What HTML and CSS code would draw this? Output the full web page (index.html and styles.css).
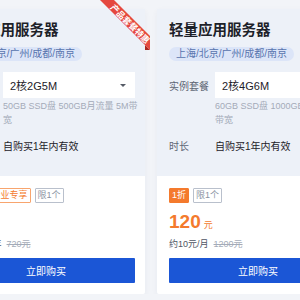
FILE: index.html
```html
<!DOCTYPE html>
<html lang="zh-CN">
<head>
    <meta charset="UTF-8">
    <title>轻量应用服务器</title>
    <link rel="stylesheet" href="styles.css">
</head>
<body>

<div class="cards">

    <div class="card">
        <svg class="ribbon" width="70" height="60" viewBox="0 0 70 60">
            <polygon class="ribbon-fold" points="55,45 60,50 55,50"></polygon>
            <polygon class="ribbon-band" points="1,-9 15,-9 24,0 60,36 60,50 10,0"></polygon>
            <text class="ribbon-text" x="0" y="0" transform="translate(40 24) rotate(45)">产品套餐特惠</text>
        </svg>
        <div class="card-top">
            <h2 class="card-title">轻量应用服务器</h2>
            <div class="region">上海/北京/广州/成都/南京</div>
            <div class="spec-row">
                <span class="spec-label">实例套餐</span>
                <div class="select"><span>2核2G5M</span><i class="caret"></i></div>
            </div>
            <div class="spec-desc">50GB SSD盘 500GB月流量 5M带宽</div>
            <div class="spec-row duration">
                <span class="spec-label">时长</span>
                <span class="spec-value">自购买1年内有效</span>
            </div>
        </div>
        <div class="card-bottom">
            <div class="tags">
                <span class="tag tag-fill">2.5折</span>
                <span class="tag tag-line">企业专享</span>
                <span class="tag tag-gray">限1个</span>
            </div>
            <div class="price"><strong>72</strong><span>元</span></div>
            <div class="price-sub"><span>约72元/1年</span><s>720元</s></div>
            <button class="buy">立即购买</button>
        </div>
    </div>

    <div class="card">
        <div class="card-top">
            <h2 class="card-title">轻量应用服务器</h2>
            <div class="region">上海/北京/广州/成都/南京</div>
            <div class="spec-row">
                <span class="spec-label">实例套餐</span>
                <div class="select"><span>2核4G6M</span><i class="caret"></i></div>
            </div>
            <div class="spec-desc">60GB SSD盘 1000GB月流量 6M带宽</div>
            <div class="spec-row duration">
                <span class="spec-label">时长</span>
                <span class="spec-value">自购买1年内有效</span>
            </div>
        </div>
        <div class="card-bottom">
            <div class="tags">
                <span class="tag tag-fill">1折</span>
                <span class="tag tag-gray">限1个</span>
            </div>
            <div class="price"><strong>120</strong><span>元</span></div>
            <div class="price-sub"><span>约10元/月</span><s>1200元</s></div>
            <button class="buy">立即购买</button>
        </div>
    </div>

</div>

</body>
</html>
```

FILE: styles.css
```css
:root {
    --page-bg: #f2f4f8;
    --card-top-bg: #edf1f8;
    --title-color: #1d2129;
    --label-color: #5f6775;
    --muted-color: #a4abb8;
    --orange: #f47a2d;
    --blue: #1b56d6;
}

body {
    margin: 0;
    background-color: var(--page-bg);
    font-family: "Liberation Sans", "Noto Sans CJK SC", sans-serif;
    color: var(--title-color);
}

.cards {
    display: flex;
    gap: 12px;
    width: max-content;
    margin-left: -55px;
    padding-top: 9px;
}

.card {
    position: relative;
    flex: none;
    width: 200px;
    background-color: #ffffff;
    border-radius: 2px;
    box-shadow: 0 2px 6px rgba(30, 50, 90, 0.05);
}

/* corner ribbon, hangs over the card edge */
.ribbon {
    position: absolute;
    left: 145px;
    top: -9px;
}
.ribbon-band {
    fill: #e5483f;
}
.ribbon-fold {
    fill: #a8261f;
}
.ribbon-text {
    fill: #ffffff;
    font-size: 8.5px;
    font-weight: bold;
    text-anchor: middle;
    dominant-baseline: central;
}

.card-top {
    box-sizing: border-box;
    height: 167px;
    padding: 11px 10px 0 12px;
    background-color: var(--card-top-bg);
}

.card-title {
    margin: 0;
    font-size: 14.5px;
    line-height: 20px;
    font-weight: bold;
}

.region {
    width: fit-content;
    margin-top: 7px;
    padding: 0 7px;
    height: 14px;
    line-height: 14px;
    border-radius: 7px;
    background-color: #dce5f8;
    color: #5874ae;
    font-size: 10px;
}

.spec-row {
    display: grid;
    grid-template-columns: 46px 132px;
    align-items: center;
    margin-top: 11px;
}
.spec-label {
    font-size: 10px;
    color: var(--label-color);
}

.select {
    box-sizing: border-box;
    height: 26px;
    display: flex;
    align-items: center;
    justify-content: space-between;
    padding: 0 9px 0 7px;
    background-color: #ffffff;
    font-size: 11px;
}
.caret {
    border-left: 3px solid transparent;
    border-right: 3px solid transparent;
    border-top: 3px solid #555b66;
}

.spec-desc {
    width: 136px;
    margin: 1px 0 0 46px;
    font-size: 9px;
    line-height: 14px;
    color: var(--muted-color);
}

.spec-row.duration {
    margin-top: 7px;
    line-height: 26px;
}
.spec-value {
    font-size: 10px;
}

.card-bottom {
    padding: 12px 10px 11px 12px;
}

.tags {
    display: flex;
    gap: 4px;
}
.tag {
    padding: 0 2px;
    font-size: 9px;
    line-height: 13px;
    border: 1px solid;
    border-radius: 1px;
}
.tag-fill {
    background-color: var(--orange);
    border-color: var(--orange);
    color: #ffffff;
}
.tag-line {
    border-color: #f8a56e;
    color: var(--orange);
}
.tag-gray {
    border-color: #b9c0cc;
    color: #8a93a3;
}

.price {
    margin-top: 7px;
    line-height: 24px;
    color: var(--orange);
}
.price strong {
    font-size: 19px;
}
.price span {
    margin-left: 3px;
    font-size: 9px;
}

.price-sub {
    display: flex;
    gap: 5px;
    font-size: 9px;
    line-height: 14px;
    color: #4e5563;
}
.price-sub s {
    color: var(--muted-color);
}

.buy {
    display: block;
    width: 100%;
    height: 25px;
    margin-top: 7px;
    border: none;
    border-radius: 1px;
    background-color: var(--blue);
    color: #ffffff;
    font-family: inherit;
    font-size: 10px;
}
```
